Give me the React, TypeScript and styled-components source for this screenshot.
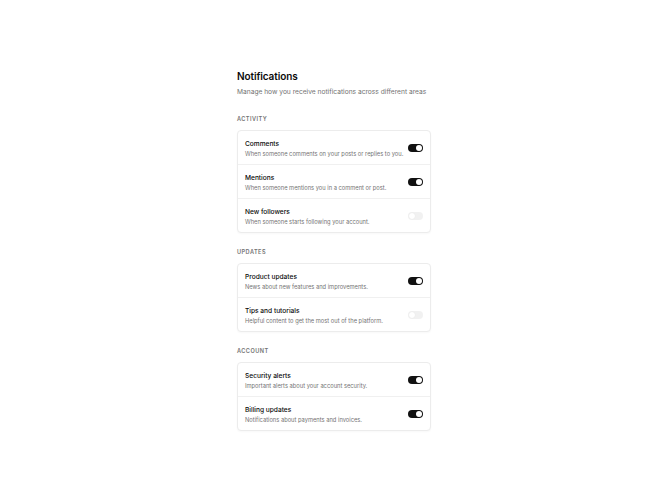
import { useState } from 'react';
import styled, { createGlobalStyle } from 'styled-components';

interface Setting {
    id: string;
    title: string;
    description: string;
    enabled: boolean;
}

interface Section {
    label: string;
    items: Setting[];
}

const sections: Section[] = [
    {
        label: 'Activity',
        items: [
            { id: 'comments', title: 'Comments', description: 'When someone comments on your posts or replies to you.', enabled: true },
            { id: 'mentions', title: 'Mentions', description: 'When someone mentions you in a comment or post.', enabled: true },
            { id: 'followers', title: 'New followers', description: 'When someone starts following your account.', enabled: false },
        ],
    },
    {
        label: 'Updates',
        items: [
            { id: 'product', title: 'Product updates', description: 'News about new features and improvements.', enabled: true },
            { id: 'tips', title: 'Tips and tutorials', description: 'Helpful content to get the most out of the platform.', enabled: false },
        ],
    },
    {
        label: 'Account',
        items: [
            { id: 'security', title: 'Security alerts', description: 'Important alerts about your account security.', enabled: true },
            { id: 'billing', title: 'Billing updates', description: 'Notifications about payments and invoices.', enabled: true },
        ],
    },
];

export default function App() {
    const [state, setState] = useState<Record<string, boolean>>(() => {
        const initial: Record<string, boolean> = {};
        sections.forEach(s => s.items.forEach(i => (initial[i.id] = i.enabled)));
        return initial;
    });

    const toggle = (id: string) => setState(prev => ({ ...prev, [id]: !prev[id] }));

    return (
        <>
            <GlobalStyle />
            <Page>
                <Panel>
                    <Title>Notifications</Title>
                    <Subtitle>Manage how you receive notifications across different areas</Subtitle>
                    {sections.map((section, idx) => (
                        <SectionBlock key={section.label} $first={idx === 0}>
                            <SectionLabel>{section.label}</SectionLabel>
                            <Card>
                                {section.items.map(item => (
                                    <Row key={item.id}>
                                        <RowText>
                                            <RowTitle>{item.title}</RowTitle>
                                            <RowDesc>{item.description}</RowDesc>
                                        </RowText>
                                        <Switch
                                            type="button"
                                            role="switch"
                                            aria-checked={state[item.id]}
                                            $on={state[item.id]}
                                            onClick={() => toggle(item.id)}
                                        >
                                            <Thumb $on={state[item.id]} />
                                        </Switch>
                                    </Row>
                                ))}
                            </Card>
                        </SectionBlock>
                    ))}
                </Panel>
            </Page>
        </>
    );
}

const GlobalStyle = createGlobalStyle`
    html, body {
        margin: 0;
        padding: 0;
        background: #ffffff;
    }
    body {
        font-family: Inter, "Noto Sans", "Liberation Sans", sans-serif;
        color: #0a0a0a;
        -webkit-font-smoothing: antialiased;
    }
`;

const Page = styled.div`
    min-height: 100vh;
    display: flex;
    align-items: center;
    justify-content: center;
`;

const Panel = styled.div`
    width: 194px;
    display: flex;
    flex-direction: column;
`;

const Title = styled.h1`
    margin: 0;
    font-size: 10px;
    line-height: 12px;
    font-weight: 600;
    letter-spacing: -0.01em;
    color: #0a0a0a;
`;

const Subtitle = styled.p`
    margin: 6px 0 0;
    font-size: 6.65px;
    line-height: 9px;
    color: #737373;
`;

const SectionBlock = styled.section<{ $first: boolean }>`
    margin-top: ${p => (p.$first ? '18px' : '15px')};
    display: flex;
    flex-direction: column;
    gap: 7px;
`;

const SectionLabel = styled.h2`
    margin: 0;
    font-size: 5.6px;
    line-height: 8px;
    font-weight: 600;
    letter-spacing: 0.08em;
    text-transform: uppercase;
    color: #737373;
`;

const Card = styled.div`
    border: 1px solid #ececec;
    border-radius: 4px;
    background: #fff;
    box-shadow: 0 1px 2px rgba(0, 0, 0, 0.03);
    overflow: hidden;
`;

const Row = styled.div`
    height: 33px;
    padding: 0 7px;
    display: flex;
    align-items: center;
    justify-content: space-between;
    & + & {
        border-top: 1px solid #f0f0f0;
    }
`;

const RowText = styled.div`
    display: flex;
    flex-direction: column;
    gap: 1px;
    padding-top: 2px;
`;

const RowTitle = styled.span`
    font-size: 6.6px;
    line-height: 9px;
    font-weight: 500;
    color: #0a0a0a;
`;

const RowDesc = styled.span`
    font-size: 5.75px;
    line-height: 8px;
    color: #737373;
`;

const Switch = styled.button<{ $on: boolean }>`
    flex: none;
    width: 15px;
    height: 8px;
    padding: 0;
    border: none;
    border-radius: 4px;
    background: ${p => (p.$on ? '#111111' : '#e5e5e5')};
    opacity: ${p => (p.$on ? 1 : 0.5)};
    display: flex;
    align-items: center;
    cursor: pointer;
`;

const Thumb = styled.span<{ $on: boolean }>`
    width: 6px;
    height: 6px;
    border-radius: 50%;
    background: #fff;
    box-shadow: 0 0 1px rgba(0, 0, 0, 0.2);
    transform: translateX(${p => (p.$on ? '8px' : '1px')});
`;
